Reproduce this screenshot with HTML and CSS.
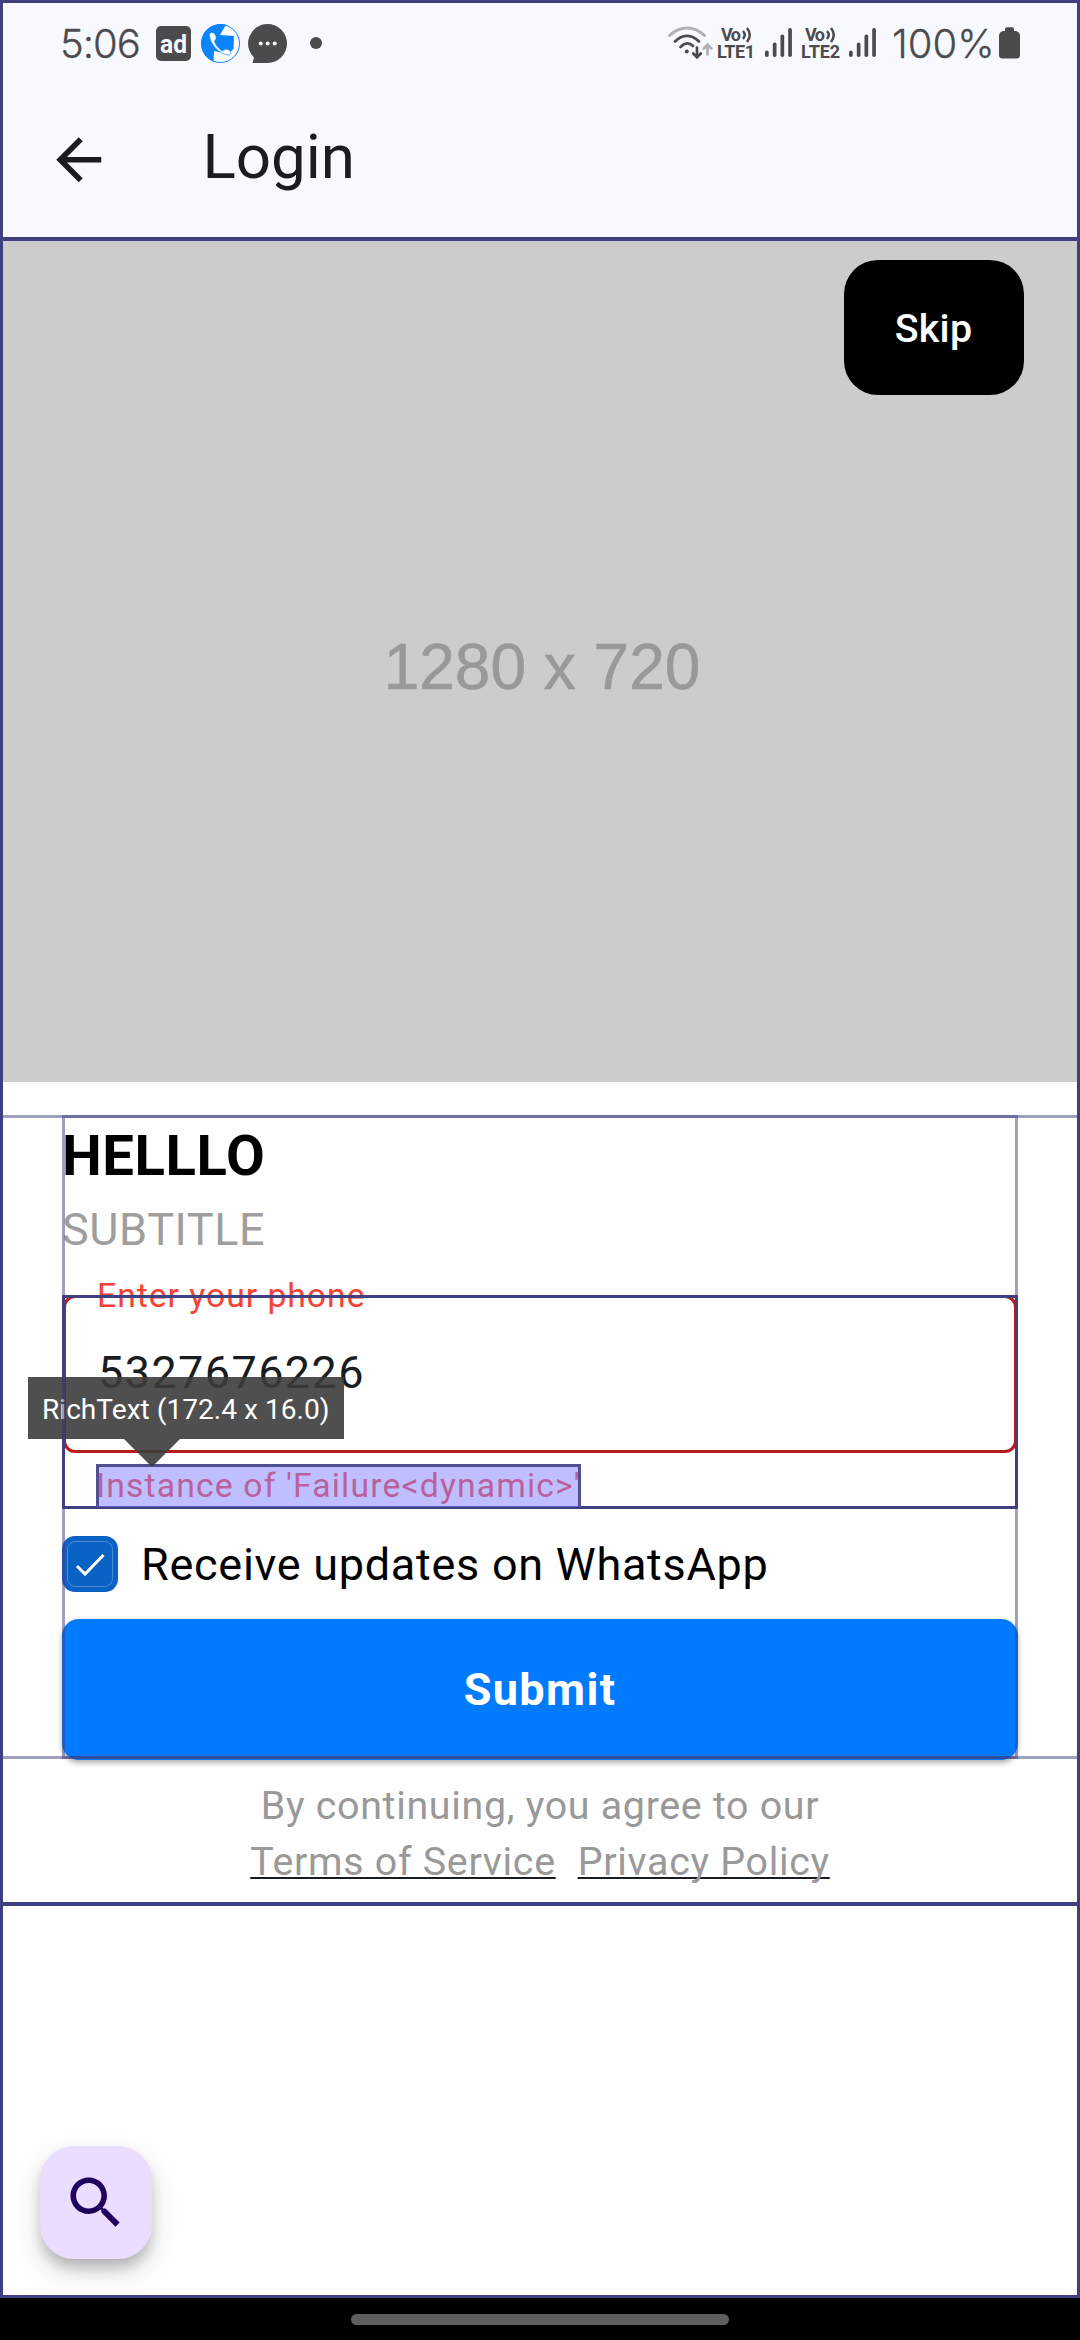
FILE: index.html
```html
<!DOCTYPE html>
<html lang="en">
<head>
<meta charset="utf-8">
<title>Login</title>
<link rel="stylesheet" href="styles.css">
</head>
<body>
<main class="screen">
  <header class="top">
    <div class="status">
      <span class="clock">5:06</span>
      <svg class="ic-ad" width="35" height="35" viewBox="0 0 35 35"><rect width="35" height="35" rx="5" fill="#4b4b4d"/><text x="4" y="27" textLength="27" lengthAdjust="spacingAndGlyphs" class="ad-text">ad</text></svg>
      <svg class="ic-call" width="39" height="39" viewBox="0 0 39 39"><circle cx="19.5" cy="19.5" r="19" fill="#fff" stroke="#0a84ff" stroke-width="1"/><path d="M25 .8A19.5 19.5 0 0 0 12.500 37.700L13 27L27 30L32.500 25L33 12L19 11Z" fill="#0a84ff"/><path d="M8.500 10C10 7.500 13 8.500 14 10.500C16 13.500 15 16 13.500 17C14.500 21 18 25 21.500 27C23.500 25 26 24.500 28.500 26.500C31 28 30 30.500 28 31C19 31 8 20 8.500 10Z" fill="#fff" stroke="#0a84ff" stroke-width=".7"/></svg>
      <svg class="ic-chat" width="39" height="39" viewBox="0 0 39 39"><path d="M19.500 0A19.500 19.500 0 0 1 19.500 39H4.500L6 33.500A19.500 19.500 0 0 1 19.500 0Z" fill="#4b4b4d"/><g fill="#f8f9ff"><circle cx="12.700" cy="19.500" r="2"/><circle cx="19.700" cy="19.500" r="2"/><circle cx="26.700" cy="19.500" r="2"/></g></svg>
      <i class="dot"></i>
      <svg class="ic-wifi" width="45" height="34" viewBox="0 0 45 34" fill="none" stroke-linecap="round"><path d="M1.500 9.500C12-.5 26-.5 36.500 9.500" stroke="#b0b0b5" stroke-width="3"/><path d="M7 15.500C14.500 8 23.500 8 31 15.500M12.500 21C17 16.500 21.500 16.500 25 20" stroke="#4b4b4d" stroke-width="2.800"/><circle cx="18.800" cy="25.500" r="2" fill="#4b4b4d"/><path d="M29 21.500V31M25.200 27.500L29 31.300L32.800 27.500" stroke="#4b4b4d" stroke-width="2.700"/><path d="M39.500 28.500V19.500M35.700 22.500L39.500 18.700L43.300 22.500" stroke="#b0b0b5" stroke-width="2.700"/></svg>
      <svg class="ic-lte" width="39" height="34" viewBox="0 0 39 34"><text x="4" y="15" textLength="20" class="lte">Vo</text><path d="M26 5Q29.500 9 26 13M30 2Q35.500 9 30 16" fill="none" stroke="#4b4b4d" stroke-width="2.500"/><text x="0" y="32" textLength="38" class="lte">LTE1</text></svg>
      <svg class="ic-bars" width="27" height="30" viewBox="0 0 27 30"><g fill="#4b4b4d"><rect y="22.500" width="3.700" height="6.500" rx="1.800"/><rect x="7.800" y="14.500" width="3.700" height="14.500" rx="1.800"/><rect x="15.500" y="6.500" width="3.700" height="22.500" rx="1.800"/><rect x="23.200" width="3.700" height="29" rx="1.800"/></g></svg>
      <svg class="ic-lte" width="39" height="34" viewBox="0 0 39 34"><text x="4" y="15" textLength="20" class="lte">Vo</text><path d="M26 5Q29.500 9 26 13M30 2Q35.500 9 30 16" fill="none" stroke="#4b4b4d" stroke-width="2.500"/><text x="0" y="32" textLength="39" class="lte">LTE2</text></svg>
      <svg class="ic-bars" width="27" height="30" viewBox="0 0 27 30"><g fill="#4b4b4d"><rect y="22.500" width="3.700" height="6.500" rx="1.800"/><rect x="7.800" y="14.500" width="3.700" height="14.500" rx="1.800"/><rect x="15.500" y="6.500" width="3.700" height="22.500" rx="1.800"/><rect x="23.200" width="3.700" height="29" rx="1.800"/></g></svg>
      <span class="percent">100%</span>
      <svg class="ic-batt" width="21" height="32" viewBox="0 0 21 32"><path d="M6 4V2Q6 .3 8 .3H13Q15 .3 15 2V4H17Q21 5 21 9V28Q21 31.500 17.500 31.500H3.500Q0 31.500 0 28V9Q0 5 4 4Z" fill="#4b4b4d"/></svg>
    </div>
    <nav class="appbar">
      <svg width="67.500" height="67.500" viewBox="0 0 24 24"><path d="M20 11H7.830l5.590-5.590L12 4l-8 8 8 8 1.410-1.410L7.830 13H20z" fill="#191c20"/></svg>
      <h1 class="bar-title">Login</h1>
    </nav>
  </header>

  <section class="hero">
    <span class="hero-size">1280 x 720</span>
    <button class="skip">Skip</button>
  </section>

  <section class="form">
    <h2 class="title">HELLLO</h2>
    <p class="subtitle">SUBTITLE</p>
    <div class="field">
      <fieldset class="outline">
        <legend class="label">Enter your phone</legend>
        <span class="value">5327676226</span>
      </fieldset>
      <div class="error">Instance of 'Failure&lt;dynamic&gt;'</div>
      <div class="frame field-frame"></div>
      <div class="pick"></div>
      <div class="tip">RichText (172.4 x 16.0)</div>
    </div>
    <div class="check-row">
      <svg width="56" height="56" viewBox="0 0 56 56"><rect width="56" height="56" rx="13" fill="#0a63c4"/><rect x="5.500" y="5.500" width="45" height="45" rx="8" fill="none" stroke="#4d8bd4" stroke-width="1"/><path d="M15 30L23 38L41.500 19" fill="none" stroke="#fff" stroke-width="3"/></svg>
      <span class="check-label">Receive updates on WhatsApp</span>
    </div>
    <button class="submit">Submit</button>
    <div class="guide guide-row"></div>
    <div class="guide guide-col"></div>
  </section>

  <footer class="legal">
    <p class="legal-line">By continuing, you agree to our</p>
    <p class="legal-line links"><a class="link">Terms of Service</a><a class="link">Privacy Policy</a></p>
  </footer>

  <button class="fab" aria-label="Search">
    <svg width="67.500" height="67.500" viewBox="0 0 24 24"><path d="M15.500 14h-.79l-.28-.27C15.410 12.590 16 11.110 16 9.500 16 5.910 13.090 3 9.500 3S3 5.910 3 9.500 5.910 16 9.500 16c1.610 0 3.090-.59 4.230-1.570l.27.28v.79l5 4.990L20.490 19l-4.990-5zm-6 0C7.010 14 5 11.990 5 9.500S7.010 5 9.500 5 14 7.010 14 9.500 11.990 14 9.500 14z" fill="#22005d"/></svg>
  </button>
  <div class="frame screen-frame"></div>
</main>
<div class="navbar"><i class="pill"></i></div>
</body>
</html>
```
FILE: styles.css
```css
* { box-sizing: border-box; }
body {
  margin: 0;
  width: 1080px;
  height: 2340px;
  background: #000;
  font-family: Roboto, "Noto Sans", sans-serif;
  color: #191c20;
  overflow: hidden;
}
h1, h2, p { margin: 0; font-weight: 400; }
button { border: 0; padding: 0; font-family: inherit; }
svg { display: block; flex: none; }

.screen {
  position: relative;
  display: flex;
  flex-direction: column;
  height: 2298px;
  background: #fefefe;
}
.frame { position: absolute; inset: 0; border: 3px solid #404080; pointer-events: none; }

.top { height: 241px; background: #f8f9ff; border-bottom: 4px solid #404080; }
.status {
  display: flex;
  align-items: flex-start;
  height: 86px;
  padding: 24px 60px 0 60px;
  color: #4b4b4d;
}
.clock, .percent {
  font: 300 40px/40px Inter, sans-serif;
  white-space: nowrap;
  -webkit-text-stroke: .3px #4b4b4d;
}
.clock { width: 96px; letter-spacing: -1px; }
.percent { width: 101px; margin-left: 16px; letter-spacing: 0; }
.ic-ad { margin-top: 2px; }
.ad-text { font: 700 26px Roboto, sans-serif; fill: #f8f9ff; }
.ic-call { margin-left: 10px; }
.ic-chat { margin-left: 8px; }
.dot { width: 12px; height: 12px; margin: 13px auto 0 23px; border-radius: 50%; background: #4b4b4d; }
.ic-wifi { margin-top: 2px; }
.ic-lte { margin: 2px 0 0 4px; overflow: visible; }
.lte { font: 700 18px Roboto, sans-serif; fill: #4b4b4d; }
.ic-bars { margin: 4px 0 0 9px; }
.ic-bars + .ic-lte { margin-left: 9px; }
.ic-batt { margin: 3px 0 0 6px; }

.appbar { display: flex; align-items: center; height: 148px; padding-left: 45px; }
.bar-title { margin-left: 90px; font-size: 61.875px; line-height: 80px; padding-bottom: 6px; }

.hero {
  position: relative;
  display: flex;
  align-items: center;
  justify-content: center;
  height: 841px;
  background: #ccc;
}
.hero-size { font: 64px/72px "Liberation Sans", Arial, sans-serif; color: #999; padding: 10px 0 0 4px; -webkit-text-stroke: .6px #999; }
.skip {
  position: absolute;
  top: 19px;
  right: 56.500px;
  width: 180px;
  height: 135px;
  padding-top: 2px;
  border-radius: 34px;
  background: #000;
  color: #fff;
  font-size: 39.375px;
  font-weight: 500;
  letter-spacing: .28px;
}

.form {
  position: relative;
  display: flex;
  flex-direction: column;
  margin-top: 33px;
  padding: 0 62px;
}
.title { font-size: 56.250px; font-weight: 700; line-height: 82px; letter-spacing: .600px; color: #000; }
.subtitle { font-size: 45px; line-height: 65px; letter-spacing: .600px; color: #9e9e9e; }

.field { position: relative; height: 214px; margin-top: 33px; }
.outline {
  height: 177px;
  margin: -19px 1px 0;
  padding: 0 0 0 32px;
  border: 3px solid #b71c1c;
  border-radius: 12px;
  min-width: 0;
}
.label {
  margin-left: -13px;
  padding: 0 12px;
  font-size: 33.750px;
  line-height: 40px;
  letter-spacing: .950px;
  color: #f44336;
}
.value { display: block; margin-top: 31px; font-size: 45px; line-height: 52px; letter-spacing: 1.400px; }
.error {
  margin: 10px 0 0 34px;
  font-size: 33.750px;
  line-height: 45px;
  letter-spacing: 1.125px;
  color: #f44336;
}
.pick {
  position: absolute;
  left: 34px;
  top: 168.500px;
  width: 485px;
  height: 43px;
  background: rgba(128, 128, 255, .5);
  border: solid #505090;
  border-width: 3px 3px 0;
}
.tip {
  position: absolute;
  left: -34px;
  top: 81.500px;
  width: 316px;
  height: 62px;
  padding-left: 14px;
  background: rgba(60, 60, 60, .9);
  color: #fff;
  font-size: 28.125px;
  line-height: 65px;
  white-space: nowrap;
}
.tip::after {
  content: "";
  position: absolute;
  left: 96px;
  top: 62px;
  border: solid transparent;
  border-width: 28px 28px 0;
  border-top-color: rgba(60, 60, 60, .9);
}

.check-row { display: flex; align-items: center; gap: 23px; height: 56px; margin-top: 27px; }
.check-label { font-size: 45px; letter-spacing: .720px; color: #000; white-space: nowrap; }

.submit {
  height: 141px;
  margin-top: 27px;
  border-radius: 17px;
  background: #007bff;
  color: #fff;
  font-size: 45px;
  font-weight: 700;
  letter-spacing: 1.400px;
  box-shadow: 0 3px 5px rgba(0, 0, 0, .3);
}

.guide { position: absolute; border: 3px solid rgba(64, 64, 128, .5); pointer-events: none; }
.guide-row { left: 0; right: 0; top: 0; height: 644px; border-width: 3px 0; }
.guide-col { left: 62px; right: 62px; top: 0; height: 644px; }

.legal { height: 146px; padding-top: 18px; border-bottom: 4px solid #404080; text-align: center; }
.legal-line { font-size: 39.375px; line-height: 56px; letter-spacing: .700px; color: #999; }
.links { display: flex; justify-content: center; gap: 22px; }
.link {
  text-decoration: underline #191c20 2px;
  text-decoration-skip-ink: none;
  text-underline-offset: 2px;
}

.fab {
  position: absolute;
  left: 39.500px;
  top: 2146px;
  display: grid;
  place-items: center;
  width: 112.500px;
  height: 112.500px;
  border-radius: 34px;
  background: #eaddff;
  box-shadow: 0 10px 14px -2px rgba(0, 0, 0, .22), 0 12px 28px rgba(0, 0, 0, .13);
}

.navbar { display: flex; justify-content: center; height: 42px; padding-top: 16px; }
.pill { width: 378px; height: 11px; border-radius: 6px; background: #5e5e5e; }
```
